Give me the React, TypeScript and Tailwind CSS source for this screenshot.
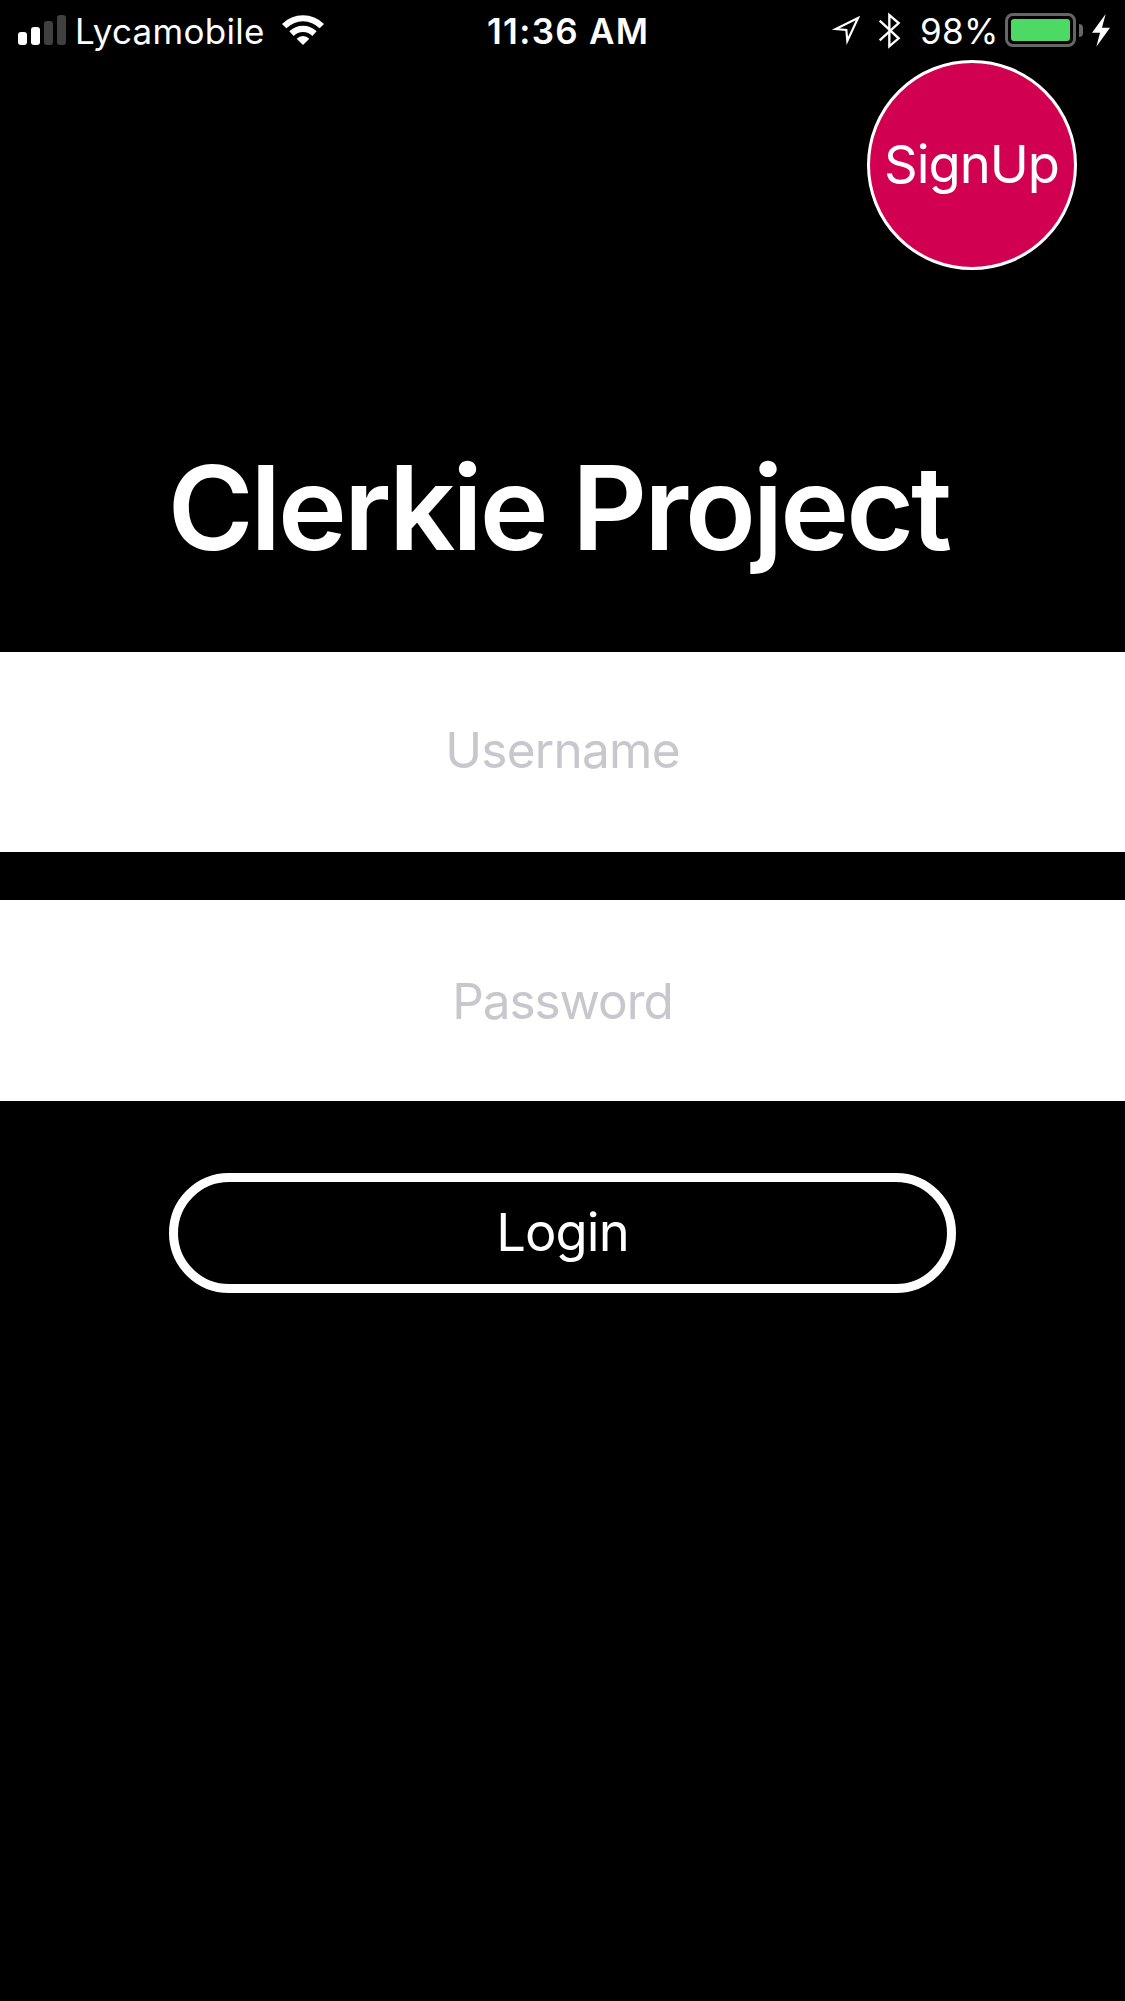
const SIGNAL_BARS = [
  "h-[13px] bg-white",
  "h-[18px] bg-white",
  "h-[24px] bg-[#404040]",
  "h-[30px] bg-[#404040]",
];

function SignalBars() {
  return (
    <div className="flex h-[30px] items-end gap-1">
      {SIGNAL_BARS.map((bar) => (
        <span key={bar} className={`w-[9px] rounded-[3px] ${bar}`} />
      ))}
    </div>
  );
}

function WifiIcon() {
  return (
    <svg className="h-[31px] w-[42px]" viewBox="-63 -90 126 93" fill="#fff">
      <path d="M-63 -63 A89 89 0 0 1 63 -63 L50 -50 A70 70 0 0 0 -50 -50 Z" />
      <path d="M-41 -41 A58 58 0 0 1 41 -41 L28 -27 A39 39 0 0 0 -28 -27 Z" />
      <path d="M-19 -19 A27 27 0 0 1 19 -19 L0 0 Z" />
    </svg>
  );
}

function LocationIcon() {
  return (
    <svg
      className="h-[32px] w-[31px]"
      viewBox="33 45 93 96"
      fill="none"
      stroke="#fff"
      strokeWidth="6.500"
      strokeMiterlimit="10"
    >
      <path d="M117 54 L50 87 L82 90 L85 123 Z" />
    </svg>
  );
}

function BluetoothIcon() {
  return (
    <svg className="h-[38px] w-[24px]" viewBox="174 36 72 114" fill="none" stroke="#fff" strokeWidth="7">
      <path d="M179 62 L236 115 L208 139 L208 45 L236 69 L179 121" />
    </svg>
  );
}

function BatteryIcon() {
  return (
    <div className="flex items-center gap-[3px]">
      <div className="h-[34px] w-[71px] rounded-[8px] border-[3px] border-[#666] p-[3px]">
        <div className="h-full w-full rounded-[3px] bg-[#4cd964]" />
      </div>
      <div className="h-[13px] w-[4px] rounded-r-full bg-[#666]" />
    </div>
  );
}

function BoltIcon() {
  return (
    <svg className="h-[33px] w-[18px]" viewBox="816 42 54 99" fill="#fff">
      <path d="M857 42 L816 98 L840 98 L829 140 L870 83 L846 83 Z" />
    </svg>
  );
}

function StatusBar() {
  return (
    <header className="flex h-15 items-center text-[35px] leading-[42px] text-white">
      <div className="ml-[18px]">
        <SignalBars />
      </div>
      <span className="ml-[9px] w-[190px] pt-[2px] tracking-[0.29px]">Lycamobile</span>
      <div className="ml-[17px]">
        <WifiIcon />
      </div>
      <span className="ml-[163px] w-[165px] pt-[2px] font-semibold whitespace-nowrap tracking-[1.3px]">
        11:36 AM
      </span>
      <div className="ml-[178px] pt-[2px]">
        <LocationIcon />
      </div>
      <div className="ml-[17px] pt-[2px]">
        <BluetoothIcon />
      </div>
      <span className="ml-[18px] w-[80px] pt-[2px] tracking-[0.3px]">98%</span>
      <div className="ml-[5px]">
        <BatteryIcon />
      </div>
      <div className="ml-[9px] pt-px">
        <BoltIcon />
      </div>
    </header>
  );
}

export default function App() {
  return (
    <main className="flex h-[2001px] w-[1125px] flex-col bg-black font-['Inter',sans-serif]">
      <StatusBar />

      <button className="mr-12 size-[210px] self-end rounded-full border-[3px] border-white bg-[#d10050] pr-px pb-[2px] text-[52.500px] tracking-[-0.94px] text-white">
        SignUp
      </button>

      <h1 className="mt-[167px] pr-2 text-center text-[116.500px] leading-[141px] font-semibold tracking-[-3px] text-white">
        Clerkie Project
      </h1>

      <form className="mt-[74px] flex flex-col">
        <input
          type="text"
          placeholder="Username"
          className="h-[200px] bg-white pb-1 text-center text-[49.500px] tracking-[-0.73px] placeholder:text-[#c7c7cd]"
        />
        <input
          type="password"
          placeholder="Password"
          className="mt-12 h-[201px] bg-white text-center text-[49.500px] tracking-[-1.1px] placeholder:text-[#c7c7cd]"
        />
        <button
          type="button"
          className="mt-[72px] h-[120px] w-[787px] self-center rounded-full border-[9px] border-white pb-[2px] text-[52.500px] tracking-[-0.9px] text-white"
        >
          Login
        </button>
      </form>
    </main>
  );
}
